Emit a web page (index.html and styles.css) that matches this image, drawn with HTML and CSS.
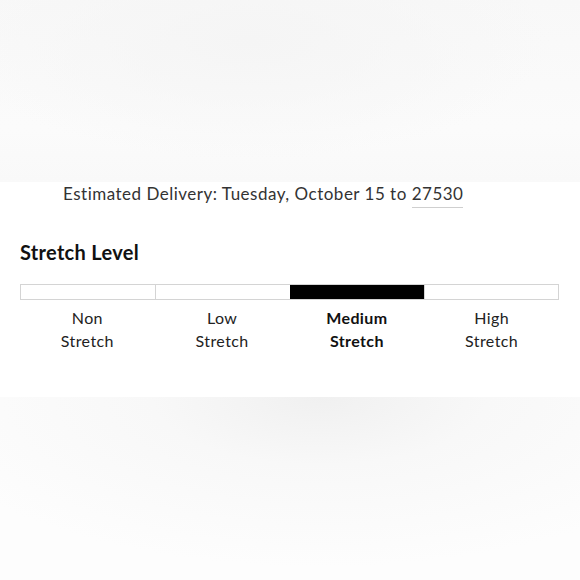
FILE: index.html
```html
<!DOCTYPE html>
<html lang="en">
<head>
  <meta charset="UTF-8">
  <title>Stretch Level</title>
  <link rel="stylesheet" href="styles.css">
</head>
<body>
<div class="page">
  <div class="fade-top"></div>

  <div class="content">
    <p class="delivery">Estimated Delivery: Tuesday, October 15 to <span class="zip">27530</span></p>

    <h3 class="stretch-title">Stretch Level</h3>

    <div class="stretch-bar">
      <div class="segment"></div>
      <div class="segment"></div>
      <div class="segment active"></div>
      <div class="segment"></div>
    </div>

    <div class="stretch-labels">
      <div class="label">Non<br>Stretch</div>
      <div class="label">Low<br>Stretch</div>
      <div class="label active">Medium<br>Stretch</div>
      <div class="label">High<br>Stretch</div>
    </div>
  </div>

  <div class="fade-bottom"></div>
</div>
</body>
</html>
```

FILE: styles.css
```css
* {
  margin: 0;
  padding: 0;
  box-sizing: border-box;
}

body {
  background: #ffffff;
  color: #333333;
  font-family: Lato, "Liberation Sans", sans-serif;
}

.page {
  width: 580px;
  height: 580px;
  display: flex;
  flex-direction: column;
  overflow: hidden;
}

/* soft grey haze above and below the card */
.fade-top {
  height: 182px;
  flex-shrink: 0;
  background:
          radial-gradient(ellipse 300px 120px at 250px 40px, #f5f5f5 0%, rgba(248, 248, 248, 0) 100%),
          linear-gradient(to bottom, #f8f8f8, #fbfbfb 70%, #f9f9f9);
}

.fade-bottom {
  flex: 1;
  background:
          radial-gradient(ellipse 420px 170px at 320px 0, #f0f0f0 0%, #f8f8f8 40%, rgba(253, 253, 253, 0) 100%),
          #fdfdfd;
}

.content {
  padding: 0 21px 0 20px;
  height: 215px;
  flex-shrink: 0;
}

.delivery {
  padding-left: 43px;
  padding-top: 1px;
  font-size: 17px;
  line-height: 22px;
  letter-spacing: 0.5px;
  color: #333333;
}

.zip {
  border-bottom: 1px solid #cfcfcf;
  padding-bottom: 3px;
}

.stretch-title {
  margin-top: 35px;
  font-size: 20px;
  font-weight: bold;
  line-height: 24px;
  letter-spacing: 0.3px;
  color: #111111;
}

.stretch-bar {
  margin-top: 20px;
  display: grid;
  grid-template-columns: repeat(4, 1fr);
  height: 16px;
  border: 1px solid #d4d4d4;
}

.segment + .segment {
  border-left: 1px solid #d4d4d4;
}

.segment.active {
  background: #000000;
  border-color: #000000;
}

.stretch-labels {
  margin-top: 6px;
  display: grid;
  grid-template-columns: repeat(4, 1fr);
}

.label {
  text-align: center;
  font-size: 16px;
  line-height: 23px;
  letter-spacing: 0.4px;
  color: #222222;
}

.label.active {
  font-weight: bold;
  color: #111111;
}
```
